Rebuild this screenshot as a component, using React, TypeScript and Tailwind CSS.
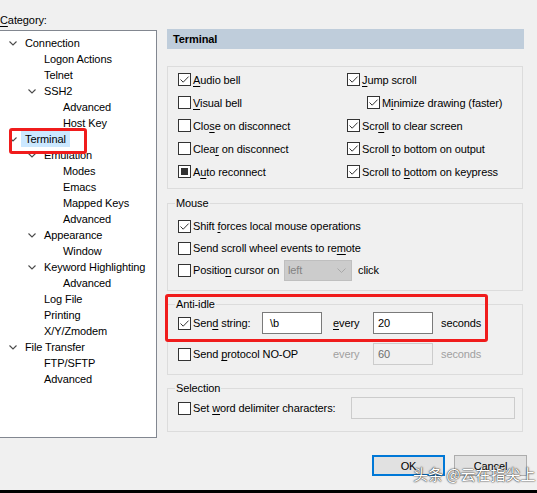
import React from 'react';

type Check = 'on' | 'off' | 'mixed';

type TreeRow = { level: number; label: string; open?: boolean; selected?: boolean };

const tree: TreeRow[] = [
  { level: 0, label: 'Connection', open: true },
  { level: 1, label: 'Logon Actions' },
  { level: 1, label: 'Telnet' },
  { level: 1, label: 'SSH2', open: true },
  { level: 2, label: 'Advanced' },
  { level: 2, label: 'Host Key' },
  { level: 0, label: 'Terminal', open: true, selected: true },
  { level: 1, label: 'Emulation', open: true },
  { level: 2, label: 'Modes' },
  { level: 2, label: 'Emacs' },
  { level: 2, label: 'Mapped Keys' },
  { level: 2, label: 'Advanced' },
  { level: 1, label: 'Appearance', open: true },
  { level: 2, label: 'Window' },
  { level: 1, label: 'Keyword Highlighting', open: true },
  { level: 2, label: 'Advanced' },
  { level: 1, label: 'Log File' },
  { level: 1, label: 'Printing' },
  { level: 1, label: 'X/Y/Zmodem' },
  { level: 0, label: 'File Transfer', open: true },
  { level: 1, label: 'FTP/SFTP' },
  { level: 1, label: 'Advanced' },
];

const indent = ['pl-[6px]', 'pl-[25px]', 'pl-[44px]'];

function Chevron() {
  return (
    <svg width="8" height="5" viewBox="0 0 8 5" className="ml-[3px]">
      <path d="M0.5 0.5 L4 4 L7.5 0.5" stroke="#4a4a4a" strokeWidth="1.1" fill="none" />
    </svg>
  );
}

function Box({ state }: { state: Check }) {
  return (
    <span className="w-[13px] h-[13px] border border-[#333] bg-white flex items-center justify-center shrink-0">
      {state === 'on' && (
        <svg width="11" height="11" viewBox="0 0 11 11">
          <path d="M1.5 5.5 L4.2 8.2 L9.6 2.6" stroke="#333" strokeWidth="1" fill="none" />
        </svg>
      )}
      {state === 'mixed' && <span className="w-[7px] h-[7px] bg-[#333]" />}
    </span>
  );
}

function K({ children }: { children: React.ReactNode }) {
  return <span className="underline underline-offset-[2px] decoration-1">{children}</span>;
}

function CheckRow({ state, children, className = '' }: { state: Check; children: React.ReactNode; className?: string }) {
  return (
    <div className={`flex items-center gap-[2px] whitespace-nowrap ${className}`}>
      <Box state={state} />
      <span>{children}</span>
    </div>
  );
}

function Field({ value, className = '', disabled }: { value?: string; className?: string; disabled?: boolean }) {
  return (
    <div
      className={`h-[22px] shrink-0 border pt-[3px] leading-[14px] ${
        disabled ? 'bg-[#f0f0f0] border-[#cccccc] text-[#6d6d6d]' : 'bg-white border-[#7a7a7a]'
      } ${className}`}
    >
      {value}
    </div>
  );
}

export default function App() {
  return (
    <div className="relative w-[537px] h-[493px] bg-[#f0f0f0] flex flex-col overflow-hidden text-[11px] leading-[14px] tracking-[-0.1px] text-black font-['Liberation_Sans','Noto_Sans_CJK_SC',sans-serif]">
      <div className="flex flex-1">
        <aside className="w-[157px] flex flex-col">
          <div className="h-[30px] pt-[13px]">
            <K>C</K>ategory:
          </div>
          <div className="h-[408px] bg-white border-t border-r border-b border-[#828790] pt-[4px]">
            {tree.map((row, i) => (
              <div key={i} className={`h-[16px] flex items-center whitespace-nowrap ${indent[row.level]}`}>
                <span className="w-[19px] shrink-0 flex items-center">{row.open && <Chevron />}</span>
                <span className={row.selected ? 'bg-[#cce8ff] -ml-[4px] pl-[4px] pr-[4px] h-[16px] flex items-center' : ''}>
                  {row.label}
                </span>
              </div>
            ))}
          </div>
        </aside>

        <main className="ml-[10px] w-[358px] pt-[29px] flex flex-col">
          <div className="h-[20px] w-[357px] bg-[#bfcddb] pl-[6px] flex items-center font-bold">Terminal</div>

          <div className="mt-[17px] w-[356px] h-[123px] border border-[#dcdcdc] pt-[1px] pl-[10px] flex">
            <div className="w-[169px] flex flex-col">
              <CheckRow state="on" className="h-[23px]"><K>A</K>udio bell</CheckRow>
              <CheckRow state="off" className="h-[23px]"><K>V</K>isual bell</CheckRow>
              <CheckRow state="off" className="h-[23px]">Clo<K>s</K>e on disconnect</CheckRow>
              <CheckRow state="off" className="h-[23px]">Clea<K>r</K> on disconnect</CheckRow>
              <CheckRow state="mixed" className="h-[23px]">A<K>u</K>to reconnect</CheckRow>
            </div>
            <div className="flex flex-col">
              <CheckRow state="on" className="h-[23px]"><K>J</K>ump scroll</CheckRow>
              <CheckRow state="on" className="h-[23px] pl-[20px]">M<K>i</K>nimize drawing (faster)</CheckRow>
              <CheckRow state="on" className="h-[23px]">Scr<K>o</K>ll to clear screen</CheckRow>
              <CheckRow state="on" className="h-[23px]">Scroll <K>t</K>o bottom on output</CheckRow>
              <CheckRow state="on" className="h-[23px]">Scroll to <K>b</K>ottom on keypress</CheckRow>
            </div>
          </div>

          <fieldset className="mt-[8px] w-[356px] border border-[#dcdcdc] px-[10px] pb-[9px]">
            <legend className="-ml-[3px] px-[1px] leading-[13px]">Mouse</legend>
            <div className="pt-[5px] flex flex-col">
              <CheckRow state="on" className="h-[22px]">Shift <K>f</K>orces local mouse operations</CheckRow>
              <CheckRow state="off" className="h-[22px]">Send scroll wheel events to re<K>m</K>ote</CheckRow>
              <div className="h-[22px] flex items-center whitespace-nowrap">
                <Box state="off" />
                <span className="ml-[2px] w-[85px]">Positio<K>n</K> cursor on</span>
                <div className="ml-[6px] w-[68px] h-[21px] bg-[#cccccc] border border-[#bfbfbf] flex items-center justify-between pl-[3px] pr-[5px] text-[#838383]">
                  <span>left</span>
                  <svg width="9" height="5" viewBox="0 0 9 5">
                    <path d="M0.5 0.5 L4.5 4.5 L8.5 0.5" stroke="#a8a8a8" strokeWidth="1" fill="none" />
                  </svg>
                </div>
                <span className="ml-[6px]">click</span>
              </div>
            </div>
          </fieldset>

          <fieldset className="mt-[7px] w-[356px] border border-[#dcdcdc] px-[10px] pb-[9px]">
            <legend className="-ml-[3px] px-[1px] leading-[13px]">Anti-idle</legend>
            <div className="pt-[1px] flex flex-col gap-[9px]">
              <div className="h-[22px] flex items-center whitespace-nowrap">
                <Box state="on" />
                <span className="ml-[2px] w-[69px]">Sen<K>d</K> string:</span>
                <Field value="\b" className="w-[60px] pl-[7px]" />
                <span className="ml-[11px] w-[40px]"><K>e</K>very</span>
                <Field value="20" className="w-[60px] pl-[4px]" />
                <span className="ml-[8px]">seconds</span>
              </div>
              <div className="h-[22px] flex items-center whitespace-nowrap">
                <Box state="off" />
                <span className="ml-[2px] w-[138px]">Send <K>p</K>rotocol NO-OP</span>
                <span className="ml-[2px] w-[40px] text-[#a0a0a0]">every</span>
                <Field value="60" disabled className="w-[60px] pl-[4px]" />
                <span className="ml-[8px] text-[#a0a0a0]">seconds</span>
              </div>
            </div>
          </fieldset>

          <fieldset className="mt-[7px] w-[356px] border border-[#dcdcdc] pl-[10px] pr-[7px] pb-[12px]">
            <legend className="-ml-[3px] px-[1px] leading-[13px]">Selection</legend>
            <div className="pt-[2px] h-[24px] flex items-end whitespace-nowrap">
              <CheckRow state="off" className="h-[22px]">Set <K>w</K>ord delimiter characters:</CheckRow>
              <Field disabled className="ml-auto w-[164px]" />
            </div>
          </fieldset>

          <div className="mt-[23px] w-[360px] flex justify-end gap-[9px]">
            <button className="w-[73px] h-[21px] bg-[#e1e1e1] border-2 border-[#0078d7] flex items-center justify-center">OK</button>
            <button className="w-[73px] h-[21px] bg-[#e1e1e1] border border-[#adadad] flex items-center justify-center">Cancel</button>
          </div>
        </main>
      </div>
      <div className="h-[3px] bg-black" />

      <div className="absolute left-[9px] top-[128px] w-[78px] h-[26px] border-[3px] border-[#f01c1c] rounded-[3px]" />
      <div className="absolute left-[165px] top-[294px] w-[323px] h-[48px] border-[3px] border-[#f01c1c] rounded-[3px]" />
      <div className="absolute left-[413px] top-[465px] text-[15px] leading-[18px] tracking-normal text-white whitespace-nowrap font-['Noto_Sans_CJK_SC',sans-serif] [text-shadow:0_0_2px_#333,0_0_1px_#000]">
        头条 @云在指尖上
      </div>
    </div>
  );
}
